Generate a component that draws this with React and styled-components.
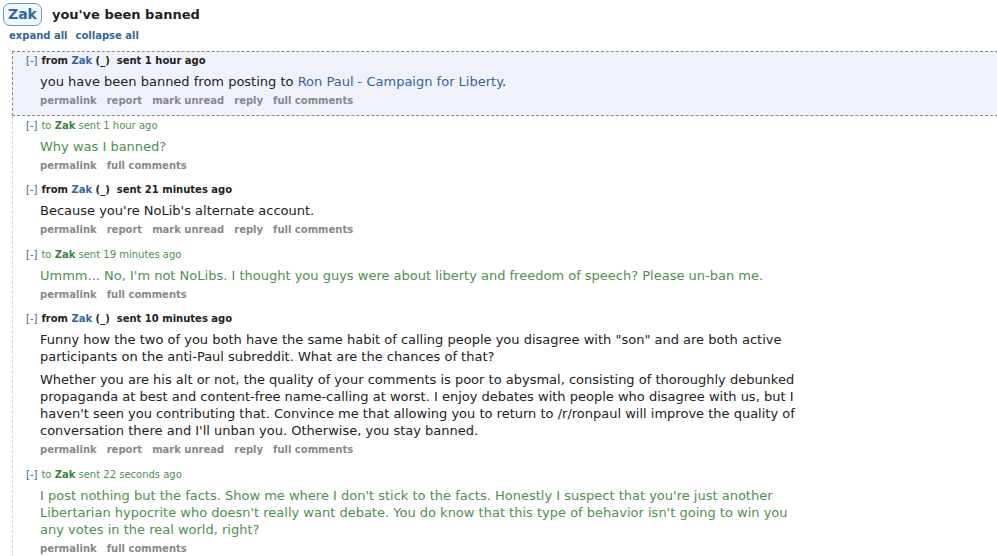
import React from 'react'
import styled, { createGlobalStyle } from 'styled-components'

const GlobalStyle = createGlobalStyle`
  html, body {
    margin: 0;
    padding: 0;
    background: #fff;
    overflow: hidden;
  }
  body {
    font-family: "DejaVu Sans", Verdana, sans-serif;
    color: #222;
  }
`

const Page = styled.div`
  padding: 3px 0 0 3px;
  width: 1020px;
`

const Header = styled.div`
  display: flex;
  align-items: center;
  gap: 10px;
`

const Badge = styled.span`
  display: inline-block;
  box-sizing: border-box;
  height: 23px;
  padding: 0 4px;
  line-height: 21px;
  border: 1px solid #5f99cf;
  border-radius: 7px;
  background: #eff7ff;
  color: #336699;
  font-size: 14px;
  font-weight: bold;
`

const Title = styled.h1`
  margin: 0;
  font-size: 13px;
  font-weight: bold;
  color: #222;
`

const Controls = styled.div`
  display: flex;
  gap: 8px;
  margin: 4px 0 0 6px;
  font-size: 10px;
  font-weight: bold;
  color: #369;
  line-height: 12px;
`

const Thread = styled.div`
  margin: 9px 0 0 9px;
  border-left: 1px dashed #d4d4d4;
`

const Message = styled.div`
  padding: 2px 0 7.5px 13px;
  margin-left: -1px;
  border: 1px dashed ${p => (p.$focus ? '#888' : 'transparent')};
  background: ${p => (p.$focus ? '#eff2fb' : 'transparent')};
`

const Tagline = styled.div`
  font-size: 10px;
  line-height: 13px;
  color: ${p => (p.$sent ? '#4f8f4f' : '#222')};
  font-weight: ${p => (p.$sent ? 'normal' : 'bold')};
`

const Toggle = styled.span`
  color: #369;
  font-weight: normal;
  margin-right: 4px;
`

const Author = styled.span`
  font-weight: bold;
  color: ${p => (p.$sent ? '#3f7f3f' : '#369')};
`

const Body = styled.div`
  margin: 6px 0 0 14px;
  max-width: 766px;
  font-size: 13px;
  line-height: 17px;
  color: ${p => (p.$sent ? '#4f8f4f' : '#222')};

  p {
    margin: 0;
  }
  p + p {
    margin-top: 6px;
  }
  a {
    color: #369;
    text-decoration: none;
  }
`

const Buttons = styled.ul`
  display: flex;
  gap: 10px;
  list-style: none;
  margin: 4px 0 0 14px;
  padding: 0;
  font-size: 10px;
  line-height: 13px;
  font-weight: bold;
  color: #888;
`

const messages = [
  {
    from: true,
    focus: true,
    time: '1 hour ago',
    body: [
      <>you have been banned from posting to <a href="#">Ron Paul - Campaign for Liberty</a>.</>,
    ],
  },
  { from: false, time: '1 hour ago', body: ['Why was I banned?'] },
  { from: true, time: '21 minutes ago', body: ["Because you're NoLib's alternate account."] },
  {
    from: false,
    time: '19 minutes ago',
    body: ["Ummm... No, I'm not NoLibs. I thought you guys were about liberty and freedom of speech? Please un-ban me."],
  },
  {
    from: true,
    time: '10 minutes ago',
    body: [
      'Funny how the two of you both have the same habit of calling people you disagree with "son" and are both active participants on the anti-Paul subreddit. What are the chances of that?',
      "Whether you are his alt or not, the quality of your comments is poor to abysmal, consisting of thoroughly debunked propaganda at best and content-free name-calling at worst. I enjoy debates with people who disagree with us, but I haven't seen you contributing that. Convince me that allowing you to return to /r/ronpaul will improve the quality of conversation there and I'll unban you. Otherwise, you stay banned.",
    ],
  },
  {
    from: false,
    time: '22 seconds ago',
    body: [
      "I post nothing but the facts. Show me where I don't stick to the facts. Honestly I suspect that you're just another Libertarian hypocrite who doesn't really want debate. You do know that this type of behavior isn't going to win you any votes in the real world, right?",
    ],
  },
]

const receivedButtons = ['permalink', 'report', 'mark unread', 'reply', 'full comments']
const sentButtons = ['permalink', 'full comments']

export default function App() {
  return (
    <Page>
      <GlobalStyle />
      <Header>
        <Badge>Zak</Badge>
        <Title>you've been banned</Title>
      </Header>
      <Controls>
        <span>expand all</span>
        <span>collapse all</span>
      </Controls>
      <Thread>
        {messages.map((m, i) => (
          <Message key={i} $focus={m.focus}>
            {m.from ? (
              <Tagline>
                <Toggle>[-]</Toggle>from <Author>Zak</Author> (_)&nbsp;&nbsp;sent {m.time}
              </Tagline>
            ) : (
              <Tagline $sent>
                <Toggle>[-]</Toggle>to <Author $sent>Zak</Author> sent {m.time}
              </Tagline>
            )}
            <Body $sent={!m.from}>
              {m.body.map((p, j) => (
                <p key={j}>{p}</p>
              ))}
            </Body>
            <Buttons>
              {(m.from ? receivedButtons : sentButtons).map(b => (
                <li key={b}>{b}</li>
              ))}
            </Buttons>
          </Message>
        ))}
      </Thread>
    </Page>
  )
}
